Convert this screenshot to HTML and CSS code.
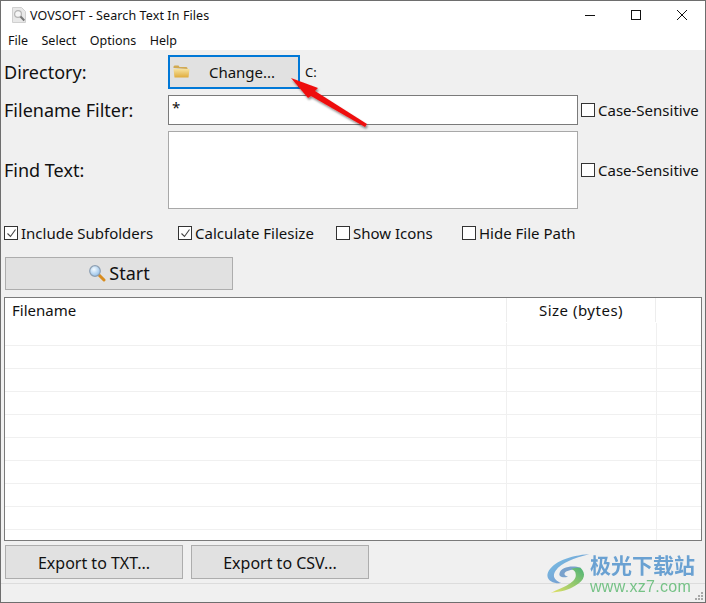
FILE: index.html
```html
<!DOCTYPE html>
<html lang="en">
<head>
<meta charset="utf-8">
<title>VOVSOFT - Search Text In Files</title>
<link rel="stylesheet" href="styles.css">
</head>
<body>
<div class="window">
  <header class="titlebar">
    <svg class="app-icon" width="16" height="18" viewBox="0 0 16 18">
      <path d="M1.5 1.5h9l4 4v11h-13z" fill="#e8e8e8" stroke="#d0d0d0"/>
      <circle cx="7" cy="8" r="3.4" fill="#f6f6f6" stroke="#b4b4b4" stroke-width="1.2"/>
      <path d="M9.5 10.5l3.8 4" stroke="#777" stroke-width="2"/>
    </svg>
    <span class="title">VOVSOFT - Search Text In Files</span>
    <div class="controls">
      <svg width="12" height="12" viewBox="0 0 12 12"><path d="M1 6.5h10" stroke="#111" fill="none"/></svg>
      <svg width="12" height="12" viewBox="0 0 12 12"><rect x="1.5" y="1.5" width="9" height="9" stroke="#111" fill="none"/></svg>
      <svg width="12" height="12" viewBox="0 0 12 12"><path d="M1 1l10 10M11 1L1 11" stroke="#111" fill="none"/></svg>
    </div>
  </header>
  <nav class="menubar">
    <span>File</span><span>Select</span><span>Options</span><span>Help</span>
  </nav>
  <main class="content">
    <div class="form">
      <label class="form-label">Directory:</label>
      <div class="dir-cell">
        <button class="btn btn-change" type="button">
          <svg class="folder" width="17" height="13" viewBox="0 0 17 13">
            <defs><linearGradient id="fg" x1="0" y1="0" x2="0" y2="1"><stop offset="0" stop-color="#f6e2a0"/><stop offset="1" stop-color="#e0ab3a"/></linearGradient></defs>
            <path d="M0.5 3V1.5L1.5 .5h4l1 1.5h7l1 1v1z" fill="#d2aa52"/>
            <path d="M0.5 4h16l-1 8.5H1.5z" fill="url(#fg)"/>
          </svg>
          <span>Change...</span>
        </button>
        <span class="dir-value">C:</span>
      </div>
      <span></span>
      <label class="form-label">Filename Filter:</label>
      <div class="input filter-input">*</div>
      <label class="check"><i class="box"></i>Case-Sensitive</label>
      <label class="form-label">Find Text:</label>
      <div class="input find-input"></div>
      <label class="check"><i class="box"></i>Case-Sensitive</label>
    </div>
    <div class="options">
      <label class="check opt-1"><i class="box checked"><svg width="11" height="11" viewBox="0 0 11 11"><path d="M1.5 5.5l3 3 5-7" stroke="#444" fill="none" stroke-width="1.1"/></svg></i>Include Subfolders</label>
      <label class="check opt-2"><i class="box checked"><svg width="11" height="11" viewBox="0 0 11 11"><path d="M1.5 5.5l3 3 5-7" stroke="#444" fill="none" stroke-width="1.1"/></svg></i>Calculate Filesize</label>
      <label class="check opt-3"><i class="box"></i>Show Icons</label>
      <label class="check"><i class="box"></i>Hide File Path</label>
    </div>
    <button class="btn btn-start" type="button">
      <svg width="18" height="18" viewBox="0 0 18 18">
        <defs><radialGradient id="lens" cx=".4" cy=".35" r=".7"><stop offset="0" stop-color="#f4fbff"/><stop offset="1" stop-color="#8fbde8"/></radialGradient></defs>
        <path d="M10.5 10.5l5.5 5.5" stroke="#d88c1e" stroke-width="3" stroke-linecap="round"/>
        <circle cx="7" cy="7" r="5.3" fill="url(#lens)" stroke="#8d9fb2" stroke-width="1.2"/>
      </svg>
      <span>Start</span>
    </button>
    <section class="list">
      <div class="list-head">
        <div class="col-name">Filename</div>
        <div class="col-size">Size (bytes)</div>
        <div class="col-rest"></div>
      </div>
      <div class="row"><i></i><i></i><i></i></div>
      <div class="row"><i></i><i></i><i></i></div>
      <div class="row"><i></i><i></i><i></i></div>
      <div class="row"><i></i><i></i><i></i></div>
      <div class="row"><i></i><i></i><i></i></div>
      <div class="row"><i></i><i></i><i></i></div>
      <div class="row"><i></i><i></i><i></i></div>
      <div class="row"><i></i><i></i><i></i></div>
      <div class="row"><i></i><i></i><i></i></div>
      <div class="row"><i></i><i></i><i></i></div>
    </section>
    <div class="exports">
      <button class="btn btn-export" type="button">Export to TXT...</button>
      <button class="btn btn-export" type="button">Export to CSV...</button>
    </div>
  </main>
  <footer class="statusbar"></footer>

  <svg class="arrow" width="90" height="60" viewBox="0 0 90 60">
    <defs><filter id="sh" x="-20%" y="-20%" width="140%" height="140%"><feDropShadow dx="1" dy="2" stdDeviation="1.2" flood-color="#000" flood-opacity=".45"/></filter></defs>
    <path d="M1 2L28 12 25 15 77 48 75 51 21 20 18 22z" fill="#ee1111" filter="url(#sh)"/>
  </svg>

  <div class="watermark">
    <svg class="wm-logo" width="46" height="41" viewBox="0 0 48 42">
      <defs>
        <linearGradient id="wb" x1="0" y1="0" x2="1" y2="1"><stop offset="0" stop-color="#6cc0e8"/><stop offset="1" stop-color="#6f86c4"/></linearGradient>
        <linearGradient id="wg" x1="1" y1="0" x2="0" y2="1"><stop offset="0" stop-color="#3fae6d"/><stop offset="1" stop-color="#e3e05a"/></linearGradient>
      </defs>
      <path d="M44 1C24 2 6 9 1 20c-3 8 6 12 14 11C8 28 5 24 9 18 15 10 28 5 44 1z" fill="url(#wb)"/>
      <path d="M35 15c-8-3-21-1-22 6-1 4 5 5 9 3-4 0-5-3-2-5 4-2 8-2 15-4z" fill="#6f9bc9"/>
      <path d="M35 15c6 6 5 13-6 19-6 4-14 6-25 7 14-6 27-11 26-19 0-3-2-5-5-6 4-1 7-1 10-1z" fill="url(#wg)"/>
    </svg>
    <div class="wm-text">
      <div class="wm-cn">极光下载站</div>
      <div class="wm-url">www.xz7.com</div>
    </div>
  </div>

  <svg class="grip" width="10" height="10" viewBox="0 0 10 10">
    <path d="M7 1h2v2H7zM4 4h2v2H4zM7 4h2v2H7zM1 7h2v2H1zM4 7h2v2H4zM7 7h2v2H7z" fill="#a8a8a8"/>
  </svg>
</div>
</body>
</html>
```

FILE: styles.css
```css
* { box-sizing: border-box; }
html, body { margin: 0; padding: 0; }
body {
  width: 706px;
  height: 603px;
  overflow: hidden;
  font-family: "Noto Sans", "Open Sans", "Liberation Sans", sans-serif;
  color: #111;
}
.window {
  position: relative;
  width: 706px;
  height: 603px;
  display: flex;
  flex-direction: column;
  border: 1px solid #6e6e6e;
  background: #f0f0f0;
  overflow: hidden;
}
.titlebar {
  height: 30px;
  background: #fff;
  display: flex;
  align-items: center;
  padding: 0 0 2px 10px;
  flex: none;
}
.app-icon { margin-right: 3px; }
.title { font-size: 12.5px; letter-spacing: .1px; }
.controls {
  margin-left: auto;
  display: flex;
  gap: 34px;
  padding-right: 17px;
  align-items: center;
}
.menubar {
  height: 19px;
  background: #fff;
  display: flex;
  gap: 13.5px;
  padding-left: 7px;
  font-size: 12.5px;
  line-height: 19px;
  flex: none;
}
.content {
  flex: 1;
  padding: 5px 3px 0;
  display: flex;
  flex-direction: column;
  min-height: 0;
}
.form {
  display: grid;
  grid-template-columns: 164px 410px auto;
  row-gap: 6px;
  align-items: center;
}
.form-label { font-size: 18px; padding-bottom: 1px; }
.dir-cell { display: flex; align-items: center; gap: 5px; height: 34px; }
.dir-value { font-size: 13px; }
.btn {
  font-family: inherit;
  color: #111;
  background: #e1e1e1;
  border: 1px solid #adadad;
  padding: 0;
  display: flex;
  align-items: center;
  justify-content: center;
}
.btn-change {
  width: 132px;
  height: 34px;
  border: 2px solid #0078d7;
  font-size: 15px;
  position: relative;
  padding-left: 16px;
}
.folder { position: absolute; left: 3px; top: 8px; }
.input {
  background: #fff;
  border: 1px solid #7a7a7a;
  font-size: 15px;
  padding: 0 3px;
}
.filter-input { height: 30px; line-height: 22px; }
.find-input { height: 78px; border-color: #a8a8a8; }
.check {
  display: flex;
  align-items: center;
  font-size: 15px;
  white-space: nowrap;
}
.form .check { padding-left: 3px; }
.box {
  width: 14px;
  height: 14px;
  border: 1px solid #333;
  background: #fff;
  margin-right: 3px;
  display: flex;
  align-items: center;
  justify-content: center;
  flex: none;
}
.options {
  display: flex;
  margin-top: 14px;
  height: 20px;
}
.opt-1 { width: 174px; }
.opt-2 { width: 158px; }
.opt-3 { width: 126px; }
.btn-start {
  width: 228px;
  height: 33px;
  margin: 14px 0 0 1px;
  font-size: 18px;
  gap: 3px;
  padding-bottom: 1px;
}
.list {
  margin-top: 7px;
  height: 244px;
  width: 698px;
  background: #fff;
  border: 1px solid #7a7a7a;
  overflow: hidden;
  flex: none;
}
.list-head {
  display: grid;
  grid-template-columns: 501px 150px 1fr;
  height: 25px;
  font-size: 15px;
}
.col-name { padding: 2px 0 0 7px; }
.col-size { padding-top: 2px; text-align: center; letter-spacing: .5px; border-left: 1px solid #ededed; border-right: 1px solid #ededed; margin-bottom: 1px; }
.row {
  display: grid;
  grid-template-columns: 502px 150px 1fr;
  height: 23px;
}
.row i { border-bottom: 1px solid #f0f0f0; border-right: 1px solid #f0f0f0; }
.row i:last-child { border-right: 0; }
.exports {
  display: flex;
  gap: 8px;
  margin: 4px 0 0 1px;
}
.btn-export { width: 178px; height: 34px; font-size: 16px; padding-top: 1px; }
.statusbar {
  margin-top: 3px;
  height: 19px;
  border-top: 1px solid #dcdcdc;
  flex: none;
}
.arrow {
  position: absolute;
  left: 289px;
  top: 75px;
}
.watermark {
  position: absolute;
  left: 546px;
  top: 552px;
  display: flex;
  gap: 0;
  filter: blur(.3px);
  opacity: .92;
}
.wm-logo { flex: none; margin-right: -3px; }
.wm-text { margin-top: -1px; }
.wm-cn {
  font-family: "Noto Sans CJK SC", sans-serif;
  font-weight: 700;
  font-size: 21px;
  line-height: 25px;
  color: #5f9bd0;
}
.wm-url {
  font-family: "Liberation Sans", sans-serif;
  font-size: 16px;
  line-height: 20px;
  color: #6cbf7e;
  letter-spacing: .3px;
}
.grip { position: absolute; right: 1px; bottom: 1px; }
```
